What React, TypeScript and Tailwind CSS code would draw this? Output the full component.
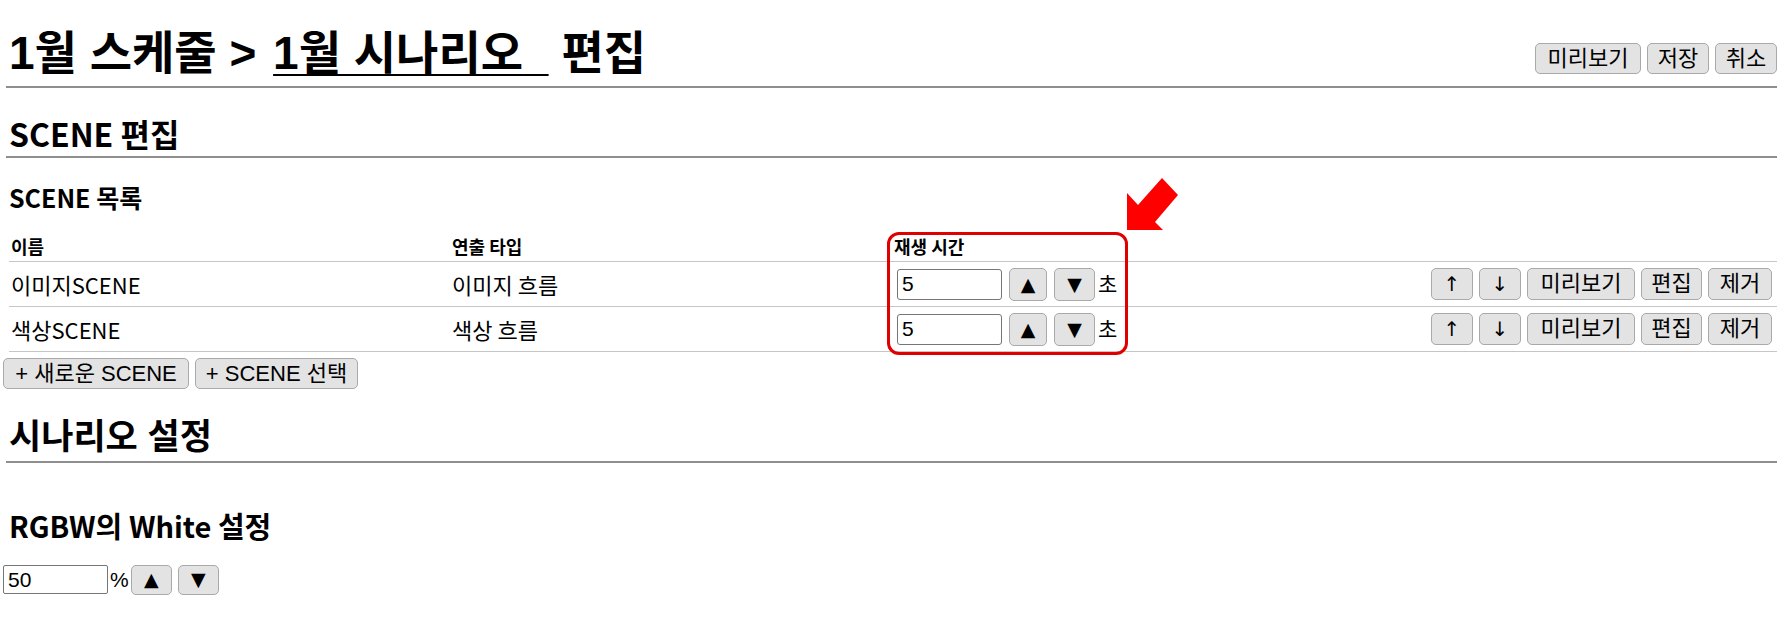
import React from 'react';

const sans = "font-['Liberation_Sans','Noto_Sans_CJK_KR',sans-serif]";
const kr = "font-['Noto_Sans_CJK_KR',sans-serif]";
const tri = "font-['DejaVu_Sans',sans-serif]";

interface BtnProps {
    className: string;
    children: React.ReactNode;
}

// plain grey system-looking button
const Btn: React.FC<BtnProps> = ({ className, children }) => (
    <button
        type="button"
        className={`${sans} inline-flex shrink-0 items-center justify-center rounded-[5px] border border-[#a9a9a9] bg-[#e3e3e3] text-[22px] leading-none text-black ${className}`}
    >
        {children}
    </button>
);

interface Scene {
    name: string;
    type: string;
    duration: number;
}

const scenes: Scene[] = [
    { name: '이미지SCENE', type: '이미지 흐름', duration: 5 },
    { name: '색상SCENE', type: '색상 흐름', duration: 5 },
];

export default function App() {
    return (
        <div className="h-[621px] w-[1784px] overflow-hidden bg-white pl-[3px] pr-[7px] text-black">
            {/* Title bar */}
            <div className="ml-[3px] flex h-[88px] items-end justify-between border-b-2 border-[#8e8e8e]">
                <h1 className={`${sans} mb-[6px] ml-[3px] text-[46px] font-bold leading-[54px]`}>
                    1월 스케줄 &gt;{' '}
                    <span className="ml-[4px] underline decoration-[2px] underline-offset-[5px]">1월 시나리오{'\u00a0\u00a0'}</span>{' '}
                    편집
                </h1>
                <div className="mb-[12px] flex gap-[6px]">
                    <Btn className="h-[31px] w-[106px]">미리보기</Btn>
                    <Btn className="h-[31px] w-[62px]">저장</Btn>
                    <Btn className="h-[31px] w-[62px]">취소</Btn>
                </div>
            </div>

            {/* SCENE 편집 */}
            <div className="ml-[3px] h-[70px] border-b-2 border-[#8e8e8e] pt-[25px]">
                <h2 className={`${kr} ml-[3px] text-[32px] font-bold leading-[40px]`}>SCENE 편집</h2>
            </div>

            <h3 className={`${kr} ml-[6px] mt-[21px] mb-[17px] text-[25px] font-bold leading-[36px]`}>SCENE 목록</h3>

            {/* Scene table */}
            <div className="relative ml-[6px]">
                <div className={`${kr} grid h-[30px] grid-cols-[441px_442px_1fr] items-center border-b border-[#c6c6c6] text-[18px] font-bold`}>
                    <div className="pl-[2px]">이름</div>
                    <div className="pl-[2px]">연출 타입</div>
                    <div className="pl-[2px]">재생 시간</div>
                </div>
                {scenes.map((s, i) => (
                    <div
                        key={i}
                        className="grid h-[45px] grid-cols-[441px_442px_1fr_auto] items-center border-b border-[#c6c6c6]"
                    >
                        <div className={`${kr} pl-[2px] text-[22px]`}>{s.name}</div>
                        <div className={`${kr} pl-[2px] text-[22px]`}>{s.type}</div>
                        <div className="flex items-center pl-[5px]">
                            <input
                                readOnly
                                value={s.duration}
                                className={`${sans} h-[31px] w-[105px] rounded-[3px] border border-[#767676] px-[4px] text-[21px] outline-none`}
                            />
                            <Btn className="ml-[7px] h-[33px] w-[38px]">
                                <span className={`${tri} text-[19px]`}>▲</span>
                            </Btn>
                            <Btn className="ml-[7px] h-[33px] w-[41px]">
                                <span className={`${tri} text-[19px]`}>▼</span>
                            </Btn>
                            <span className={`${kr} ml-[3px] text-[21px]`}>초</span>
                        </div>
                        <div className="flex gap-[6px] pr-[5px]">
                            <Btn className="h-[32px] w-[42px]">
                                <span className={`${tri} text-[20px]`}>↑</span>
                            </Btn>
                            <Btn className="h-[32px] w-[42px]">
                                <span className={`${tri} text-[20px]`}>↓</span>
                            </Btn>
                            <Btn className="h-[32px] w-[108px]">미리보기</Btn>
                            <Btn className="h-[32px] w-[61px]">편집</Btn>
                            <Btn className="h-[32px] w-[64px]">제거</Btn>
                        </div>
                    </div>
                ))}

                {/* annotation: highlight box + arrow */}
                <div className="pointer-events-none absolute left-[878px] top-0 h-[123px] w-[241px] rounded-[12px] border-[3px] border-[#e00000]" />
                <svg
                    className="pointer-events-none absolute left-[1111px] top-[-62px]"
                    width="64"
                    height="66"
                    viewBox="0 0 64 66"
                >
                    <polygon points="7,60 7,23 18,35 42,8 58,25 35,52 43,60" fill="#ff0000" />
                </svg>
            </div>

            <div className="mt-[6px] flex gap-[6px]">
                <Btn className="h-[31px] w-[186px]">+ 새로운 SCENE</Btn>
                <Btn className="h-[31px] w-[163px]">+ SCENE 선택</Btn>
            </div>

            {/* 시나리오 설정 */}
            <div className="ml-[3px] h-[74px] border-b-2 border-[#8e8e8e] pt-[28px]">
                <h2 className={`${sans} ml-[3px] text-[35px] font-bold leading-[40px]`}>시나리오 설정</h2>
            </div>

            <h3 className={`${kr} ml-[6px] mt-[44px] text-[29px] font-bold leading-[36px]`}>RGBW의 White 설정</h3>

            <div className="mt-[21px] flex items-center">
                <input
                    readOnly
                    value={50}
                    className={`${sans} h-[29px] w-[105px] rounded-[2px] border border-[#767676] px-[4px] text-[21px] outline-none`}
                />
                <span className={`${sans} ml-[2px] text-[21px]`}>%</span>
                <Btn className="ml-[2px] h-[30px] w-[41px]">
                    <span className={`${tri} text-[19px]`}>▲</span>
                </Btn>
                <Btn className="ml-[6px] h-[30px] w-[41px]">
                    <span className={`${tri} text-[19px]`}>▼</span>
                </Btn>
            </div>
        </div>
    );
}
